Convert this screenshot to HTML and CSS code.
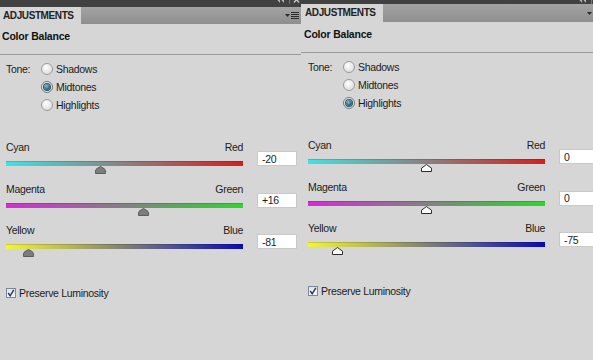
FILE: index.html
```html
<!DOCTYPE html>
<html lang="en">
<head>
  <meta charset="UTF-8">
  <title>Adjustments - Color Balance</title>
  <link rel="stylesheet" href="styles.css">
</head>
<body>
  <div class="panel first">
    <div class="topbar">
      <svg class="winbtns" width="24" height="9" viewBox="0 0 24 9">
        <path d="M4 1 L1 4.5 L4 8 Z M8 1 L5 4.5 L8 8 Z" fill="#b5b5b5"/>
        <line x1="13.5" y1="0" x2="13.5" y2="9" stroke="#777"/>
        <path d="M18 1.5 L23 7.5 M23 1.5 L18 7.5" stroke="#c8c8c8" stroke-width="1.4"/>
      </svg>
    </div>
    <div class="tabs">
      <div class="tab">ADJUSTMENTS</div>
      <svg class="menu" width="14" height="9" viewBox="0 0 14 9">
        <path d="M0 3 L5 3 L2.5 6 Z" fill="#2a2a2a"/>
        <path d="M6 1.5 H14 M6 3.5 H14 M6 5.5 H14 M6 7.5 H14" stroke="#2a2a2a"/>
      </svg>
    </div>
    <div class="title">Color Balance</div>
    <div class="content">
      <div class="tone">
        <div class="tone-label">Tone:</div>
        <div class="options">
          <div class="option"><span class="radio"></span>Shadows</div>
          <div class="option"><span class="radio on"></span>Midtones</div>
          <div class="option"><span class="radio"></span>Highlights</div>
        </div>
      </div>
      <div class="sliders">
        <div class="slider-row">
          <div class="slider">
            <div class="ends"><span>Cyan</span><span>Red</span></div>
            <div class="track cyan-red">
              <svg class="thumb" style="left:40%" width="11" height="8" viewBox="0 0 11 8"><path d="M0.5 7.5 V4.8 Q0.5 3.6 2 2.6 L5.5 0.5 L9 2.6 Q10.5 3.6 10.5 4.8 V7.5 Z"/></svg>
            </div>
          </div>
          <input class="value" type="text" value="-20">
        </div>
        <div class="slider-row">
          <div class="slider">
            <div class="ends"><span>Magenta</span><span>Green</span></div>
            <div class="track magenta-green">
              <svg class="thumb" style="left:58%" width="11" height="8" viewBox="0 0 11 8"><path d="M0.5 7.5 V4.8 Q0.5 3.6 2 2.6 L5.5 0.5 L9 2.6 Q10.5 3.6 10.5 4.8 V7.5 Z"/></svg>
            </div>
          </div>
          <input class="value" type="text" value="+16">
        </div>
        <div class="slider-row">
          <div class="slider">
            <div class="ends"><span>Yellow</span><span>Blue</span></div>
            <div class="track yellow-blue">
              <svg class="thumb" style="left:9.5%" width="11" height="8" viewBox="0 0 11 8"><path d="M0.5 7.5 V4.8 Q0.5 3.6 2 2.6 L5.5 0.5 L9 2.6 Q10.5 3.6 10.5 4.8 V7.5 Z"/></svg>
            </div>
          </div>
          <input class="value" type="text" value="-81">
        </div>
      </div>
      <div class="preserve">
        <span class="check"><svg width="8" height="8" viewBox="0 0 8 8"><path d="M1.2 4 L3.2 6.8 L6.8 0.8" fill="none" stroke="#243463" stroke-width="1.4"/></svg></span>
        Preserve Luminosity
      </div>
    </div>
  </div>

  <div class="panel second">
    <div class="topbar">
      <svg class="winbtns" width="24" height="9" viewBox="0 0 24 9">
        <path d="M4 1 L1 4.5 L4 8 Z M8 1 L5 4.5 L8 8 Z" fill="#b5b5b5"/>
        <line x1="13.5" y1="0" x2="13.5" y2="9" stroke="#777"/>
        <path d="M18 1.5 L23 7.5 M23 1.5 L18 7.5" stroke="#c8c8c8" stroke-width="1.4"/>
      </svg>
    </div>
    <div class="tabs">
      <div class="tab">ADJUSTMENTS</div>
      <svg class="menu" width="14" height="9" viewBox="0 0 14 9">
        <path d="M0 3 L5 3 L2.5 6 Z" fill="#2a2a2a"/>
        <path d="M6 1.5 H14 M6 3.5 H14 M6 5.5 H14 M6 7.5 H14" stroke="#2a2a2a"/>
      </svg>
    </div>
    <div class="title">Color Balance</div>
    <div class="content">
      <div class="tone">
        <div class="tone-label">Tone:</div>
        <div class="options">
          <div class="option"><span class="radio"></span>Shadows</div>
          <div class="option"><span class="radio"></span>Midtones</div>
          <div class="option"><span class="radio on"></span>Highlights</div>
        </div>
      </div>
      <div class="sliders">
        <div class="slider-row">
          <div class="slider">
            <div class="ends"><span>Cyan</span><span>Red</span></div>
            <div class="track cyan-red">
              <svg class="thumb" style="left:50%" width="11" height="8" viewBox="0 0 11 8"><path d="M0.5 7.5 V4.2 L5.5 0.5 L10.5 4.2 V7.5 Z"/></svg>
            </div>
          </div>
          <input class="value" type="text" value="0">
        </div>
        <div class="slider-row">
          <div class="slider">
            <div class="ends"><span>Magenta</span><span>Green</span></div>
            <div class="track magenta-green">
              <svg class="thumb" style="left:50%" width="11" height="8" viewBox="0 0 11 8"><path d="M0.5 7.5 V4.2 L5.5 0.5 L10.5 4.2 V7.5 Z"/></svg>
            </div>
          </div>
          <input class="value" type="text" value="0">
        </div>
        <div class="slider-row">
          <div class="slider">
            <div class="ends"><span>Yellow</span><span>Blue</span></div>
            <div class="track yellow-blue">
              <svg class="thumb" style="left:12.5%" width="11" height="8" viewBox="0 0 11 8"><path d="M0.5 7.5 V4.2 L5.5 0.5 L10.5 4.2 V7.5 Z"/></svg>
            </div>
          </div>
          <input class="value" type="text" value="-75">
        </div>
      </div>
      <div class="preserve">
        <span class="check"><svg width="8" height="8" viewBox="0 0 8 8"><path d="M1.2 4 L3.2 6.8 L6.8 0.8" fill="none" stroke="#243463" stroke-width="1.4"/></svg></span>
        Preserve Luminosity
      </div>
    </div>
  </div>
</body>
</html>
```

FILE: styles.css
```css
body {
  margin: 0;
  height: 360px;
  overflow: hidden;
  display: flex;
  background-color: #d6d6d6;
  font-family: "Liberation Sans", Arial, sans-serif;
  font-size: 10.5px;
  letter-spacing: -0.3px;
  color: #1c1c1c;
}
.panel {
  flex: none;
  width: 302px;
  height: 360px;
  overflow: hidden;
  background-color: #d6d6d6;
}
.panel.first {
  margin-left: -1px;
}
.topbar {
  height: 7px;
  background-color: #414141;
  overflow: hidden;
  display: flex;
  justify-content: flex-end;
  align-items: flex-start;
}
.panel.second .topbar {
  height: 4px;
}
.winbtns {
  margin-top: -5px;
  margin-right: 1px;
}
.tabs {
  height: 17px;
  display: flex;
  align-items: center;
  justify-content: space-between;
  background: linear-gradient(#a3a3a3, #8f8f8f);
}
.panel.second .tabs {
  height: 18px;
}
.tab {
  width: 82px;
  height: 100%;
  box-sizing: border-box;
  padding: 3px 0 0 4px;
  background-color: #d6d6d6;
  font-size: 10px;
  font-weight: bold;
  line-height: 12px;
  letter-spacing: -0.4px;
  color: #222;
}
.menu {
  margin-right: 2px;
}
.title {
  height: 31px;
  box-sizing: border-box;
  padding: 5px 0 0 3px;
  border-bottom: 1px solid #9a9a9a;
  font-weight: bold;
  line-height: 14px;
  letter-spacing: -0.2px;
  color: #111;
}
.content {
  padding: 0 7px;
}
.tone {
  display: flex;
  margin-top: 5px;
}
.tone-label {
  width: 35px;
  line-height: 18px;
}
.option {
  height: 18px;
  display: flex;
  align-items: center;
  gap: 3px;
}
.radio {
  width: 12px;
  height: 12px;
  box-sizing: border-box;
  border: 1px solid #9c9c9c;
  border-radius: 50%;
  background: radial-gradient(circle at 40% 35%, #ffffff, #dedede 75%);
  display: flex;
  align-items: center;
  justify-content: center;
}
.radio.on {
  border-color: #6b7c86;
}
.radio.on::after {
  content: "";
  width: 6px;
  height: 6px;
  border-radius: 50%;
  background: radial-gradient(circle at 40% 35%, #7fc0d4, #1d5a72 70%);
  box-shadow: 0 0 0 1px #35505e;
}
.sliders {
  margin-top: 27px;
}
.slider-row {
  display: flex;
  align-items: flex-end;
  gap: 14px;
  margin-bottom: 16.5px;
}
.slider {
  flex: none;
  width: 237px;
}
.ends {
  display: flex;
  justify-content: space-between;
  line-height: 12px;
}
.track {
  position: relative;
  height: 5px;
  margin-top: 8px;
  box-shadow: inset 0 1px 0 rgba(0, 0, 0, 0.15);
}
.cyan-red {
  background: linear-gradient(to right, #40e2e2, #d61e1e);
}
.magenta-green {
  background: linear-gradient(to right, #d52cd6, #2fd52f);
}
.yellow-blue {
  background: linear-gradient(to right, #f4f43c, #0b0bb2);
}
.thumb {
  position: absolute;
  top: 100%;
  margin-left: -5.5px;
}
.panel.first .thumb path {
  fill: #7d7d7d;
  stroke: #5c5c5c;
}
.panel.second .thumb path {
  fill: #fbfbfb;
  stroke: #2c2c2c;
}
.value {
  flex: none;
  width: 40px;
  height: 15px;
  box-sizing: border-box;
  margin: 0;
  padding: 0 4px;
  border: 1px solid #c9c9c9;
  background: #fff;
  font: inherit;
  letter-spacing: -0.3px;
  line-height: 13px;
  color: #1c1c1c;
  outline: none;
}
.preserve {
  display: flex;
  align-items: center;
  gap: 3px;
  margin-top: 37px;
  line-height: 14px;
}
.check {
  width: 10px;
  height: 10px;
  box-sizing: border-box;
  border: 1px solid #7c8799;
  background: linear-gradient(#dfe3e8, #f6f6f6);
  display: flex;
  align-items: center;
  justify-content: center;
}
```
